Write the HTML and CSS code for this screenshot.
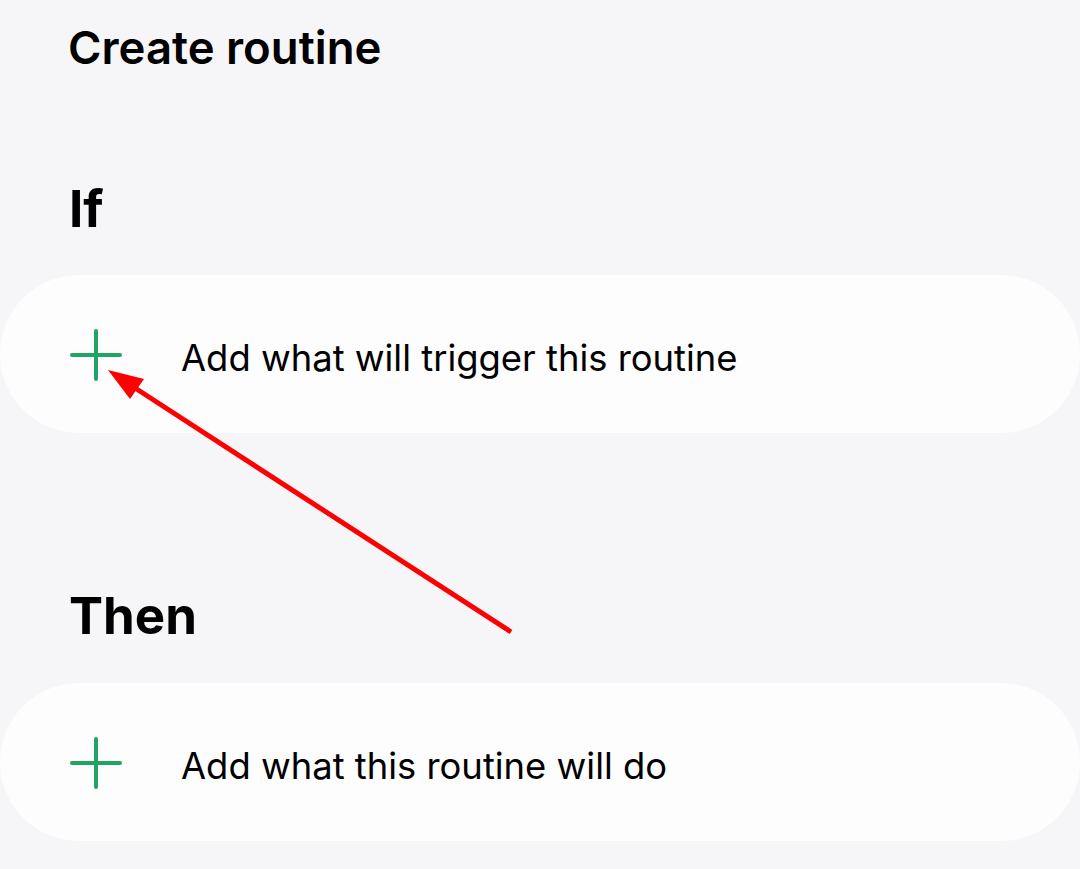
FILE: index.html
```html
<!DOCTYPE html>
<html lang="en">
<head>
<meta charset="utf-8">
<title>Create routine</title>
<link rel="stylesheet" href="styles.css">
</head>
<body>
<main class="screen">
  <h1 class="title">Create routine</h1>

  <section class="group group-if">
    <h2 class="group-title">If</h2>
    <div class="card">
      <span class="plus">
        <svg viewBox="0 0 52 52" width="52" height="52" aria-hidden="true">
          <path d="M2 26H50M26 2V50" stroke="#1fa463" stroke-width="4" stroke-linecap="round" fill="none"/>
        </svg>
      </span>
      <span class="card-text">Add what will trigger this routine</span>
    </div>
  </section>

  <section class="group group-then">
    <h2 class="group-title">Then</h2>
    <div class="card">
      <span class="plus">
        <svg viewBox="0 0 52 52" width="52" height="52" aria-hidden="true">
          <path d="M2 26H50M26 2V50" stroke="#1fa463" stroke-width="4" stroke-linecap="round" fill="none"/>
        </svg>
      </span>
      <span class="card-text">Add what this routine will do</span>
    </div>
  </section>

  <svg class="annotation" viewBox="0 0 1080 869" width="1080" height="869" aria-hidden="true">
    <line x1="511" y1="632" x2="132" y2="386" stroke="#ff0000" stroke-width="5"/>
    <polygon points="108,370 144,379 130,399" fill="#ff0000"/>
  </svg>
</main>
</body>
</html>
```

FILE: styles.css
```css
* { box-sizing: border-box; }

html, body {
  margin: 0;
  padding: 0;
}

body {
  background: #f6f6f8;
  font-family: Inter, "Noto Sans", "DejaVu Sans", sans-serif;
  color: #000;
}

.screen {
  position: relative;
  width: 1080px;
  height: 869px;
  overflow: hidden;
}

.title {
  margin: 0;
  padding: 26px 0 0 68px;
  font-size: 45.5px;
  line-height: 44px;
  font-weight: 600;
  letter-spacing: 0;
}

.group-title {
  margin: 0;
  padding-left: 69px;
  font-size: 51px;
  line-height: 54px;
  font-weight: 700;
}

.group-if { margin-top: 112px; }
.group-if .group-title { margin-bottom: 39px; }

.group-then { margin-top: 156px; }
.group-then .group-title { margin-bottom: 40px; }

.card {
  display: flex;
  align-items: center;
  height: 158px;
  background: #fdfdfe;
  border-radius: 79px;
  padding-left: 70px;
}

.plus {
  display: flex;
  width: 52px;
  height: 52px;
  margin-top: 2px;
}

.card-text {
  margin-left: 59px;
  margin-top: 8px;
  font-size: 36.4px;
  font-weight: 400;
}

.annotation {
  position: absolute;
  left: 0;
  top: 0;
  pointer-events: none;
}
```
